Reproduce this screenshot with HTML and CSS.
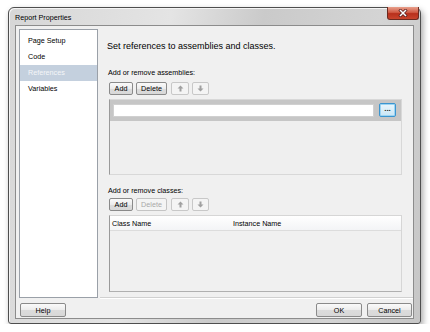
FILE: index.html
```html
<!DOCTYPE html>
<html lang="en">
<head>
    <meta charset="UTF-8">
    <title>Report Properties</title>
    <link rel="stylesheet" href="styles.css">
</head>
<body>

    <div class="window">
        <div class="titlebar">
            <span class="title">Report Properties</span>
            <div class="close">
                <svg width="12" height="8" viewBox="0 0 12 8">
                    <path d="M3.5 1.5 L8.5 6.5 M8.5 1.5 L3.5 6.5" stroke="#5a2020" stroke-width="3" stroke-linecap="square"/>
                    <path d="M3.5 1.5 L8.5 6.5 M8.5 1.5 L3.5 6.5" stroke="#ffffff" stroke-width="1.5" stroke-linecap="square"/>
                </svg>
            </div>
        </div>

        <div class="client">
            <div class="content">
                <ul class="nav">
                    <li>Page Setup</li>
                    <li>Code</li>
                    <li class="selected">References</li>
                    <li>Variables</li>
                </ul>

                <div class="main">
                    <h1>Set references to assemblies and classes.</h1>

                    <div class="label">Add or remove assemblies:</div>
                    <div class="toolbar">
                        <button class="btn btn-add">Add</button>
                        <button class="btn btn-delete">Delete</button>
                        <button class="btn btn-arrow">
                            <svg width="7" height="7" viewBox="0 0 7 7"><path d="M3.5 0.5 L6.5 3.5 L4.5 3.5 L4.5 6.5 L2.5 6.5 L2.5 3.5 L0.5 3.5 Z" fill="#a0a0a0"/></svg>
                        </button>
                        <button class="btn btn-arrow btn-down">
                            <svg width="7" height="7" viewBox="0 0 7 7"><path d="M3.5 6.5 L6.5 3.5 L4.5 3.5 L4.5 0.5 L2.5 0.5 L2.5 3.5 L0.5 3.5 Z" fill="#a0a0a0"/></svg>
                        </button>
                    </div>

                    <div class="assemblies">
                        <div class="assembly-row">
                            <div class="textbox"></div>
                            <button class="browse">...</button>
                        </div>
                    </div>

                    <div class="label label-classes">Add or remove classes:</div>
                    <div class="toolbar toolbar-classes">
                        <button class="btn btn-add">Add</button>
                        <button class="btn btn-delete disabled">Delete</button>
                        <button class="btn btn-arrow">
                            <svg width="7" height="7" viewBox="0 0 7 7"><path d="M3.5 0.5 L6.5 3.5 L4.5 3.5 L4.5 6.5 L2.5 6.5 L2.5 3.5 L0.5 3.5 Z" fill="#a0a0a0"/></svg>
                        </button>
                        <button class="btn btn-arrow btn-down">
                            <svg width="7" height="7" viewBox="0 0 7 7"><path d="M3.5 6.5 L6.5 3.5 L4.5 3.5 L4.5 0.5 L2.5 0.5 L2.5 3.5 L0.5 3.5 Z" fill="#a0a0a0"/></svg>
                        </button>
                    </div>

                    <div class="grid">
                        <div class="grid-head">
                            <span class="col-class">Class Name</span>
                            <span class="col-instance">Instance Name</span>
                        </div>
                    </div>
                </div>
            </div>

            <div class="footer">
                <button class="btn btn-footer">Help</button>
                <div class="spacer"></div>
                <button class="btn btn-footer">OK</button>
                <button class="btn btn-footer btn-cancel">Cancel</button>
            </div>
        </div>
    </div>

</body>
</html>
```

FILE: styles.css
```css
body {
    margin: 0;
    padding: 7px 0 0 8px;
    background: #ffffff;
    font-family: 'Liberation Sans', Arial, sans-serif;
    font-size: 7.2px;
    color: #000000;
}

.window {
    box-sizing: border-box;
    width: 413px;
    height: 317px;
    padding: 0 6px 4px 6px;
    border: 1px solid #4e4e4e;
    border-radius: 6px 6px 3px 3px;
    background: linear-gradient(100deg, #d6d6d6 0%, #e4e4e4 35%, #cacaca 55%, #d4d4d4 80%, #c6c6c6 100%);
    box-shadow: 2px 3px 6px rgba(0, 0, 0, 0.35), inset 1px 1px 0 #f4f4f4;
    display: flex;
    flex-direction: column;
}

/* title bar */
.titlebar {
    height: 17px;
    display: flex;
    align-items: flex-start;
}

.title {
    margin-top: 5px;
}

.close {
    margin-left: auto;
    margin-right: -5px;
    margin-top: -1px;
    width: 32px;
    height: 13px;
    box-sizing: border-box;
    border: 1px solid #6b2a20;
    border-top: none;
    border-radius: 0 0 3px 3px;
    background: linear-gradient(#e8a08c 0%, #d05a44 45%, #b8301c 55%, #c8442c 100%);
    display: flex;
    align-items: center;
    justify-content: center;
}

/* client area */
.client {
    flex: 1;
    box-sizing: border-box;
    border: 1px solid #8c8c8c;
    background: #f0f0f0;
    padding: 3px 0 0 3px;
    display: flex;
    flex-direction: column;
}

.content {
    height: 269px;
    display: flex;
    gap: 2px;
}

.nav {
    list-style: none;
    margin: 0;
    width: 79px;
    box-sizing: border-box;
    padding: 3px 0 0 0;
    border: 1px solid #9aa0a8;
    background: #ffffff;
}

.nav li {
    height: 16px;
    line-height: 16px;
    padding-left: 8px;
}

.nav li.selected {
    background: #c4d0de;
    color: #f4f6f8;
}

.main {
    flex: 1;
    box-sizing: border-box;
    padding: 0 11px 0 8px;
    border-bottom: 1px solid #d0d0d0;
    box-shadow: 0 1px 0 #ffffff;
}

.main h1 {
    margin: 10px 0 0 -1px;
    font-size: 9px;
    font-weight: normal;
    line-height: 14px;
}

.label {
    margin-top: 14px;
    line-height: 12px;
}

.label-classes {
    margin-top: 10px;
}

.toolbar {
    margin: 3px 0 0 1px;
    height: 13px;
    display: flex;
}

.toolbar-classes {
    margin-top: 1px;
}

.btn {
    box-sizing: border-box;
    height: 13px;
    padding: 0;
    border: 1px solid #8a8a8a;
    border-radius: 2px;
    background: linear-gradient(#fafafa 0%, #ececec 50%, #dcdcdc 51%, #d8d8d8 100%);
    font-family: 'Liberation Sans', Arial, sans-serif;
    font-size: 7.2px;
    color: #000000;
    display: flex;
    align-items: center;
    justify-content: center;
}

.btn-add {
    width: 24px;
}

.btn-delete {
    width: 31px;
    margin-left: 3px;
}

.btn.disabled {
    color: #a8a8a8;
    border-color: #c4c4c4;
    background: #f4f4f4;
}

.btn-arrow {
    width: 18px;
    margin-left: 4px;
    border-color: #c8c8c8;
    background: #f4f4f4;
}

.btn-down {
    width: 17px;
    margin-left: 3px;
}

/* assemblies list */
.assemblies {
    margin: 4px 0 0 1px;
    height: 76px;
    box-sizing: border-box;
    border: 1px solid #d8d8d8;
    border-left-color: #9a9a9a;
    background: #efefef;
}

.assembly-row {
    height: 21px;
    box-sizing: border-box;
    padding: 3px 5px 0 3px;
    background: #c6c6c6;
    display: flex;
    gap: 5px;
}

.textbox {
    flex: 1;
    height: 13px;
    margin-top: 1px;
    background: #ffffff;
    border: 1px solid #d0d0d0;
    box-sizing: border-box;
}

.browse {
    width: 17px;
    height: 14px;
    box-sizing: border-box;
    padding: 0 0 3px 0;
    border: 1px solid #3a95d0;
    border-radius: 2px;
    background: linear-gradient(#eaf6fc, #c9e6f6);
    box-shadow: inset 0 0 0 1px #9cd4f2;
    font-family: 'Liberation Sans', Arial, sans-serif;
    font-size: 8px;
    font-weight: bold;
    line-height: 8px;
    color: #222222;
}

/* classes grid */
.grid {
    margin: 4px 0 0 1px;
    height: 77px;
    box-sizing: border-box;
    border: 1px solid #d6d6d6;
    border-left-color: #9a9a9a;
    border-bottom-color: #b0b0b0;
    background: #f0f0f0;
}

.grid-head {
    height: 15px;
    box-sizing: border-box;
    border-bottom: 1px solid #dcdcdc;
    background: linear-gradient(#ffffff, #f3f4f6);
    display: flex;
    align-items: center;
}

.col-class {
    width: 123px;
    padding-left: 2px;
    box-sizing: border-box;
}

/* footer buttons */
.footer {
    display: flex;
    padding: 5px 1px 0 1px;
    gap: 5px;
}

.btn-footer {
    width: 46px;
    height: 14px;
}

.btn-cancel {
    width: 45px;
}

.spacer {
    flex: 1;
}
```
